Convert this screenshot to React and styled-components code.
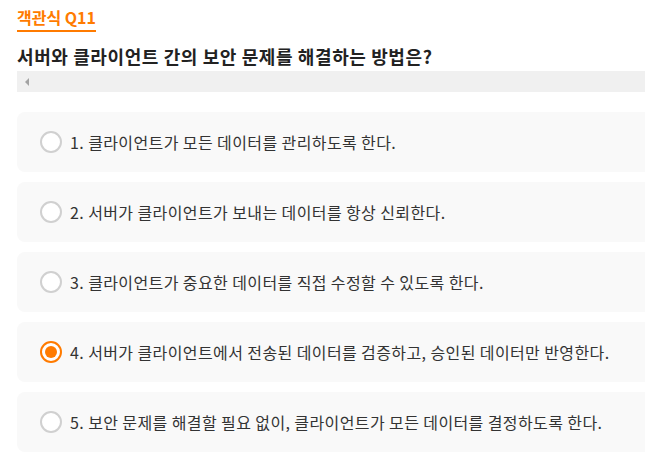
import React, { useState } from 'react'
import styled, { createGlobalStyle } from 'styled-components'

const GlobalStyle = createGlobalStyle`
    body {
        margin: 0;
        background: #fff;
        overflow: hidden;
        font-family: "Noto Sans CJK KR", "Noto Sans", sans-serif;
    }
`

const options = [
    '클라이언트가 모든 데이터를 관리하도록 한다.',
    '서버가 클라이언트가 보내는 데이터를 항상 신뢰한다.',
    '클라이언트가 중요한 데이터를 직접 수정할 수 있도록 한다.',
    '서버가 클라이언트에서 전송된 데이터를 검증하고, 승인된 데이터만 반영한다.',
    '보안 문제를 해결할 필요 없이, 클라이언트가 모든 데이터를 결정하도록 한다.',
]

function App() {
    const [selected, setSelected] = useState(3)

    return (
        <Page>
            <GlobalStyle />
            <Tag>객관식 Q11</Tag>
            <Question>서버와 클라이언트 간의 보안 문제를 해결하는 방법은?</Question>
            <ScrollTrack>
                <ScrollArrow />
            </ScrollTrack>
            <OptionList>
                {options.map((text, i) => (
                    <Option key={i} onClick={() => setSelected(i)}>
                        <Radio $checked={selected === i} />
                        <OptionText>{i + 1}. {text}</OptionText>
                    </Option>
                ))}
            </OptionList>
        </Page>
    )
}

export default App;

const Page = styled.div`
    width: 700px;
    padding: 6px 0 0 17px;
    display: flex;
    flex-direction: column;
    align-items: flex-start;
`
const Tag = styled.div`
    font-size: 16px;
    line-height: 22px;
    font-weight: 700;
    color: #ff7b00;
    padding-bottom: 2px;
    border-bottom: 2px solid #ff7b00;
`
const Question = styled.h2`
    margin: 12px 0 0;
    font-size: 18px;
    line-height: 24px;
    letter-spacing: 0.6px;
    font-weight: 700;
    color: #222;
`
const ScrollTrack = styled.div`
    align-self: stretch;
    height: 21px;
    margin-top: 3px;
    background: #f0f0f0;
    display: flex;
    align-items: center;
    padding-left: 8px;
`
const ScrollArrow = styled.div`
    width: 0;
    height: 0;
    border-top: 4px solid transparent;
    border-bottom: 4px solid transparent;
    border-right: 4px solid #a3a3a3;
`
const OptionList = styled.div`
    align-self: stretch;
    margin-top: 20px;
    display: flex;
    flex-direction: column;
    gap: 10px;
`
const Option = styled.div`
    height: 60px;
    border-radius: 8px;
    background: #f9f9f9;
    display: flex;
    align-items: center;
    padding-left: 23px;
    gap: 8px;
    cursor: pointer;
`
const Radio = styled.span`
    width: 22px;
    height: 22px;
    box-sizing: border-box;
    border-radius: 50%;
    border: 2px solid ${p => p.$checked ? '#ff7b00' : '#d0d0d0'};
    background: #fff;
    display: flex;
    align-items: center;
    justify-content: center;
    &::after {
        content: '';
        width: 12px;
        height: 12px;
        border-radius: 50%;
        background: ${p => p.$checked ? '#ff7b00' : 'transparent'};
    }
`
const OptionText = styled.span`
    font-size: 16px;
    letter-spacing: 0.4px;
    color: #333;
`
